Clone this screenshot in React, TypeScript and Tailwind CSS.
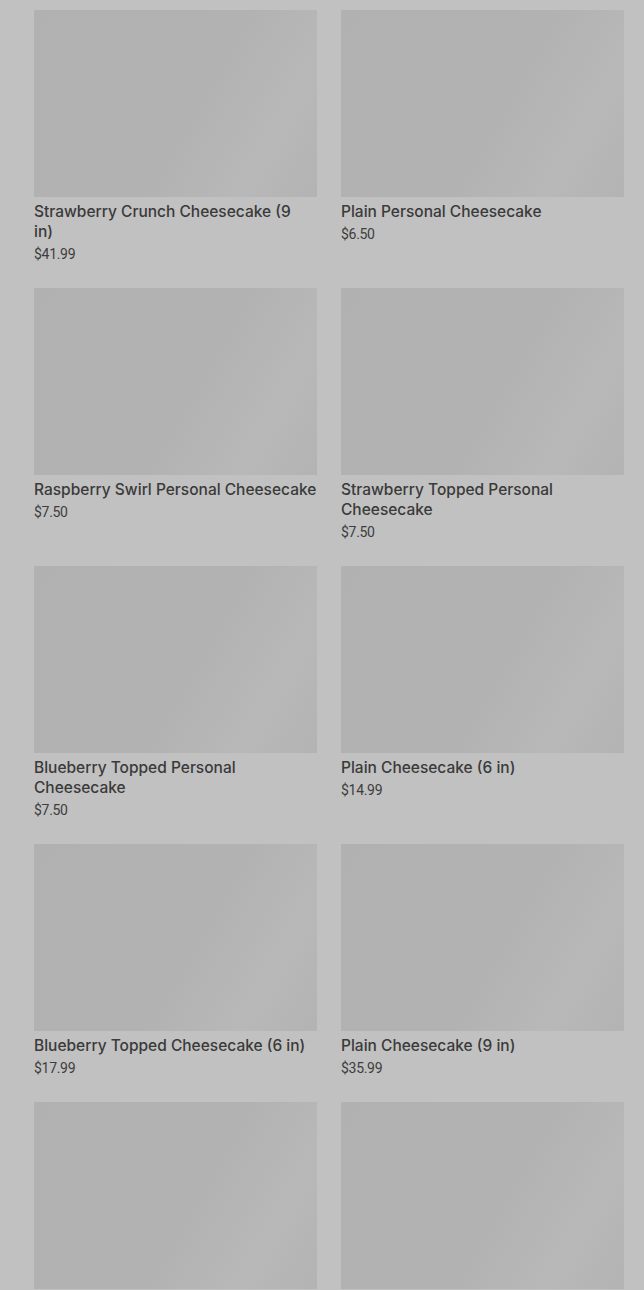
import React from "react";

const items: { name: React.ReactNode; price: string }[] = [
  { name: <>Strawberry Crunch Cheesecake (9<br />in)</>, price: "$41.99" },
  { name: "Plain Personal Cheesecake", price: "$6.50" },
  { name: "Raspberry Swirl Personal Cheesecake", price: "$7.50" },
  { name: "Strawberry Topped Personal Cheesecake", price: "$7.50" },
  { name: "Blueberry Topped Personal Cheesecake", price: "$7.50" },
  { name: "Plain Cheesecake (6 in)", price: "$14.99" },
  { name: "Blueberry Topped Cheesecake (6 in)", price: "$17.99" },
  { name: "Plain Cheesecake (9 in)", price: "$35.99" },
  { name: "Cherry Topped Cheesecake (6 in)", price: "$17.99" },
  { name: "Turtle Cheesecake (9 in)", price: "$41.99" },
];

export default function App() {
  return (
    <div className="h-[1290px] w-[644px] overflow-hidden bg-[#c1c1c1]">
      <div className="grid grid-cols-2 gap-x-6 gap-y-6 pl-[34px] pr-[20px] pt-[10px]">
        {items.map((it, i) => (
          <div key={i} className="flex flex-col">
            <div className="h-[187px] w-full bg-[linear-gradient(120deg,#b1b1b1_0%,#b2b2b2_55%,#b8b8b8_80%,#b3b3b3_100%)]" />
            <div
              className="mt-[5px] text-[15.5px] leading-5 font-medium text-[#3a3a3a]"
              style={{ fontFamily: "Inter, 'Noto Sans', sans-serif" }}
            >
              {it.name}
            </div>
            <div
              className="mt-[2px] text-[14px] leading-5 text-[#3d3d3d] tracking-[-0.3px]"
              style={{ fontFamily: "Roboto, 'Noto Sans', sans-serif" }}
            >
              {it.price}
            </div>
          </div>
        ))}
      </div>
    </div>
  );
}
